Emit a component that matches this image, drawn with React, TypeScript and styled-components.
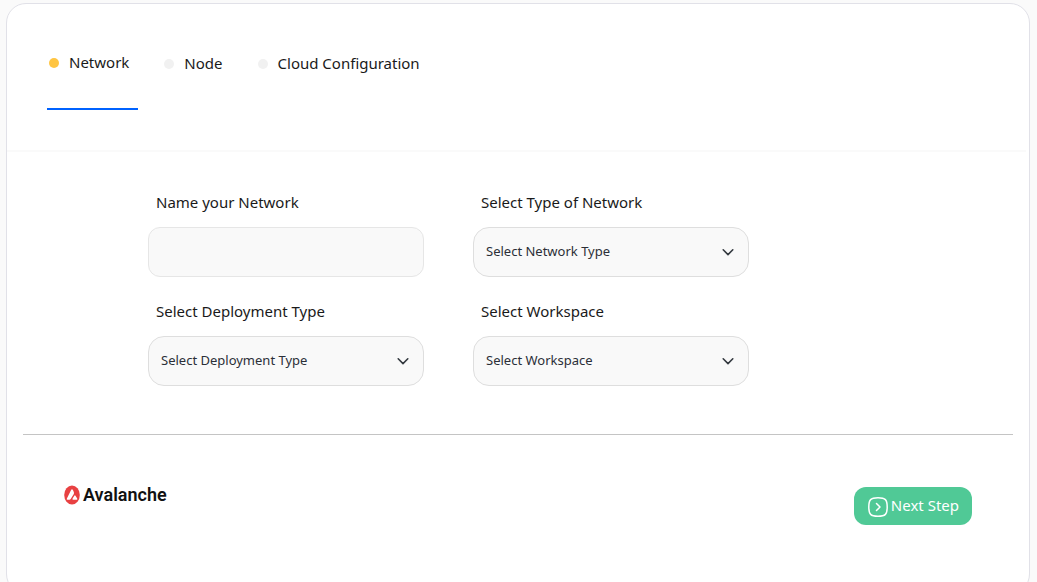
import React from "react";
import styled, { createGlobalStyle } from "styled-components";

const GlobalStyle = createGlobalStyle`
  * { box-sizing: border-box; }
  body {
    margin: 0;
    background: #fafafa;
    color: #1a1a1a;
    font-family: "Noto Sans", sans-serif;
    font-size: 15px;
    line-height: 24px;
  }
  button, input, select { font: inherit; color: inherit; }
`;

const Card = styled.main`
  margin: 3px 7px 0 6px;
  padding-bottom: 68px;
  background: #fff;
  border: 1px solid #e1e1e8;
  border-radius: 20px;
`;

const Steps = styled.nav`
  display: flex;
  align-items: flex-start;
  gap: 24px;
  margin-right: 3px;
  padding: 46px 40px 40px;
  border-bottom: 2px solid #fafafa;
`;

const Step = styled.button<{ $active?: boolean }>`
  display: flex;
  align-items: flex-start;
  gap: 10px;
  height: 60px;
  padding: ${(p) => (p.$active ? "0 9px 0 2px" : "1px 9px 0 2px")};
  background: none;
  border: 0;
  border-bottom: 2px solid ${(p) => (p.$active ? "#0062ff" : "transparent")};
`;

const Dot = styled.span<{ $active?: boolean }>`
  width: 10px;
  height: 10px;
  margin-top: 8px;
  border-radius: 50%;
  background: ${(p) => (p.$active ? "#ffc542" : "#f1f1f1")};
`;

const Fields = styled.form`
  display: grid;
  grid-template-columns: repeat(2, 276px);
  gap: 22px 49px;
  padding: 38px 16px 48px 141px;
`;

const Field = styled.div`
  display: flex;
  flex-direction: column;
  gap: 13px;
`;

const Label = styled.label`
  padding-left: 8px;
  line-height: 24px;
`;

const TextInput = styled.input`
  width: 100%;
  height: 50px;
  padding: 0 12px;
  background: #f9f9f9;
  border: 1px solid #e6e6e6;
  border-radius: 12px;
`;

const SelectWrap = styled.div`
  position: relative;
`;

const Select = styled.select`
  appearance: none;
  display: block;
  width: 100%;
  height: 50px;
  padding: 0 36px 2px 12px;
  background: #f9f9f9;
  border: 1px solid #dedede;
  border-radius: 16px;
  color: #2b2f38;
  font-size: 13px;
`;

const Chevron = styled.svg`
  position: absolute;
  right: 13px;
  top: 17px;
  pointer-events: none;
`;

const Footer = styled.footer`
  display: flex;
  justify-content: space-between;
  align-items: flex-start;
  margin: 0 16px;
  padding: 48px 41px 0 40px;
  border-top: 1px solid #c4c4c4;
`;

const Brand = styled.div`
  display: flex;
  align-items: center;
  gap: 3px;
  height: 24px;
  padding-left: 1px;
  color: #111;
  font-family: Roboto, "Liberation Sans", sans-serif;
  font-size: 18px;
  font-weight: 600;
`;

const NextButton = styled.button`
  display: flex;
  align-items: center;
  gap: 2px;
  height: 38px;
  margin-top: 4px;
  padding: 0 13px 2px;
  background: #50c996;
  border: 0;
  border-radius: 12px;
  color: #fff;
`;

const NextIcon = styled.svg`
  margin-top: 4px;
`;

const steps = ["Network", "Node", "Cloud Configuration"];

function SelectField({ id, label, placeholder }: { id: string; label: string; placeholder: string }) {
  return (
    <Field>
      <Label htmlFor={id}>{label}</Label>
      <SelectWrap>
        <Select id={id}>
          <option>{placeholder}</option>
        </Select>
        <Chevron width="16" height="16" viewBox="0 0 16 16" fill="none" aria-hidden="true">
          <path d="m3.2 5.8 4.8 4.8 4.8-4.8" stroke="#343a40" strokeWidth="1.6" strokeLinecap="round" strokeLinejoin="round" />
        </Chevron>
      </SelectWrap>
    </Field>
  );
}

export default function App() {
  return (
    <>
      <GlobalStyle />
      <Card>
        <Steps>
          {steps.map((name, i) => (
            <Step key={name} type="button" $active={i === 0}>
              <Dot $active={i === 0} />
              {name}
            </Step>
          ))}
        </Steps>
        <Fields>
          <Field>
            <Label htmlFor="name">Name your Network</Label>
            <TextInput id="name" type="text" />
          </Field>
          <SelectField id="type" label="Select Type of Network" placeholder="Select Network Type" />
          <SelectField id="deployment" label="Select Deployment Type" placeholder="Select Deployment Type" />
          <SelectField id="workspace" label="Select Workspace" placeholder="Select Workspace" />
        </Fields>
        <Footer>
          <Brand>
            <svg width="16" height="20" viewBox="0 0 16 20" aria-hidden="true">
              <ellipse cx="8" cy="10" rx="7.8" ry="9.5" fill="#e84142" />
              <path d="M7.2 4.8q.8-1.3 1.6 0l1 2.1q.4 1 0 2L6.7 14q-.5.8-1.3.8H3.5q-1.2 0-.6-1.2zM10.3 10.7q.6-1 1.2 0l1.7 2.9q.6 1.2-.6 1.2H9.2q-1.2 0-.6-1.2z" fill="#fff" />
            </svg>
            Avalanche
          </Brand>
          <NextButton type="button">
            <NextIcon width="22" height="22" viewBox="0 0 22 22" fill="none" stroke="#fff" strokeWidth="1.5" strokeLinecap="round" strokeLinejoin="round" aria-hidden="true">
              <path d="M11 1.8c7.4 0 9.2 1.8 9.2 9.2s-1.8 9.2-9.2 9.2S1.8 18.4 1.8 11 3.6 1.8 11 1.8z" />
              <path d="m9.5 7.5 3.5 3.5-3.5 3.5" />
            </NextIcon>
            Next Step
          </NextButton>
        </Footer>
      </Card>
    </>
  );
}
